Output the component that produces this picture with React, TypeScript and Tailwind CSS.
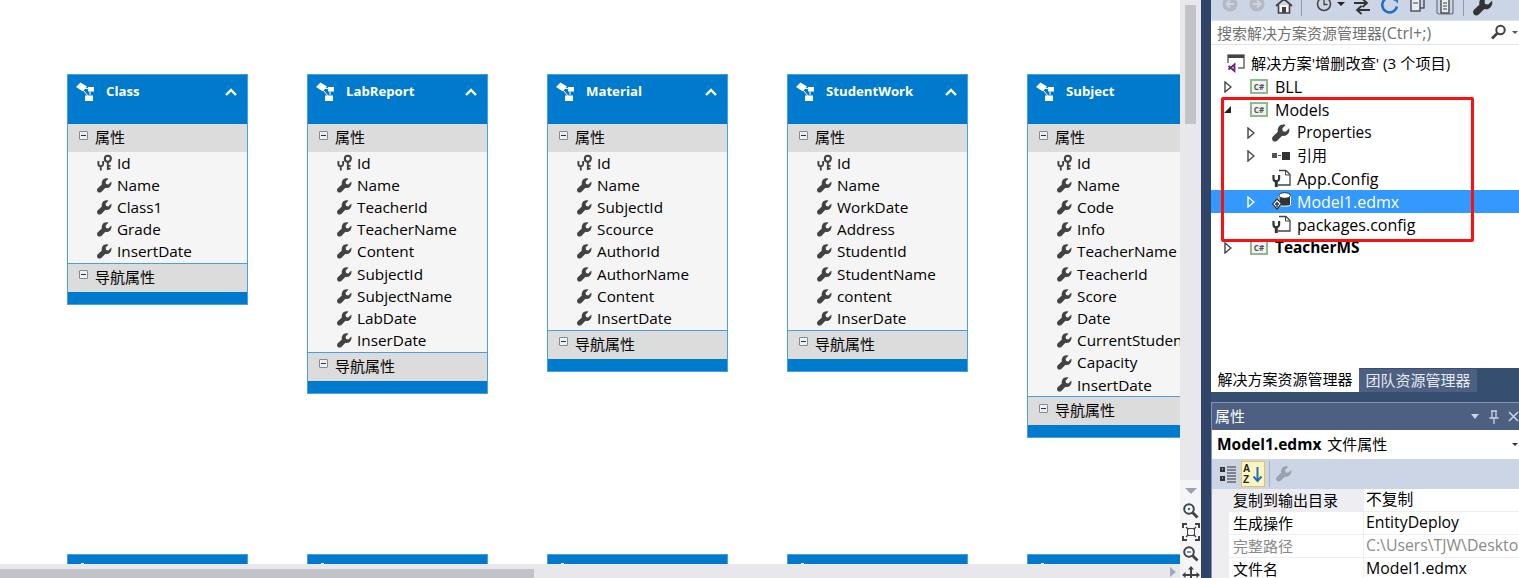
const cards = [
  { name: "Class", rows: ["Id", "Name", "Class1", "Grade", "InsertDate"] },
  { name: "LabReport", rows: ["Id", "Name", "TeacherId", "TeacherName", "Content", "SubjectId", "SubjectName", "LabDate", "InserDate"] },
  { name: "Material", rows: ["Id", "Name", "SubjectId", "Scource", "AuthorId", "AuthorName", "Content", "InsertDate"] },
  { name: "StudentWork", rows: ["Id", "Name", "WorkDate", "Address", "StudentId", "StudentName", "content", "InserDate"] },
  { name: "Subject", rows: ["Id", "Name", "Code", "Info", "TeacherName", "TeacherId", "Score", "Date", "CurrentStudent", "Capacity", "InsertDate"] },
];

const wrenchPath =
  "M15.2 3.8 L12.2 6.8 L9.6 6.4 L9.2 3.8 L12.2 .8 C9.8 -.2 7.4 .6 6 2.4 C5 3.8 4.8 5.4 5.2 6.8 L.8 11 C-.2 12 -.2 13.6 .8 14.8 C1.8 15.8 3.4 15.8 4.6 14.8 L9 10.4 C10.6 11 12.4 10.6 13.8 9.2 C15.2 7.8 15.8 5.8 15.2 3.8 Z";

function Wrench({ size = 15, color = "#424242" }: { size?: number; color?: string }) {
  return (
    <svg width={size} height={size} viewBox="0 0 16 16" className="shrink-0">
      <path d={wrenchPath} fill={color} />
    </svg>
  );
}

function KeyWrench() {
  return (
    <svg width="16" height="18" viewBox="0 0 17 18" className="shrink-0">
      <circle cx="11.500" cy="4.500" r="3.200" fill="none" stroke="#424242" strokeWidth="2.200" />
      <path d="M11.500 7.500v9M11.500 12h3M11.500 15h3" stroke="#424242" strokeWidth="2" fill="none" />
      <path d="M1.500 7v3a2.500 2.500 0 0 0 5 0V7M4 12v5" stroke="#424242" strokeWidth="2" fill="none" />
    </svg>
  );
}

function EntityIcon() {
  return (
    <svg width="20" height="21" viewBox="0 0 20 21" className="shrink-0">
      <path d="M5.500 .5 12 4.500 8 9.500 1 5z" fill="#fff" />
      <path d="M10 6.500h6M15 8v5M9 9l4 5" stroke="#fff" strokeWidth="1" fill="none" />
      <rect x="13" y="5" width="6" height="4.500" fill="#fff" />
      <rect x="10" y="13.500" width="8" height="5.500" fill="#fff" />
    </svg>
  );
}

function MinusBox() {
  return (
    <span className="flex h-[9px] w-[9px] shrink-0 items-center justify-center rounded-[1px] border border-[#7f8b9c] bg-[#eef1f5]">
      <span className="h-px w-[5px] bg-[#333]" />
    </span>
  );
}

function SectionHead({ label }: { label: string }) {
  return (
    <div className="flex h-[28px] items-center gap-[7px] bg-[#dcdcdc] pb-[1px] pl-[11px] text-[15px] leading-none text-black">
      <span className="-mt-[5px]">
        <MinusBox />
      </span>
      {label}
    </div>
  );
}

function EntityCard({ name, rows }: { name: string; rows: string[] }) {
  return (
    <div className="w-[181px] shrink-0 border border-[#4a9fdc] bg-[#007acc]">
      <div className="flex h-[49px] items-start pl-[7px] pr-[9px] pt-[7px]">
        <EntityIcon />
        <span className="ml-[11px] flex-1 text-[13.200px] font-bold leading-[18px] text-white">{name}</span>
        <svg width="14" height="10" viewBox="0 0 14 10" className="mt-[5px]">
          <path d="M2 8l5-5 5 5" stroke="#fff" strokeWidth="2.400" fill="none" />
        </svg>
      </div>
      <SectionHead label="属性" />
      <div className="bg-[#f5f5f5]">
        {rows.map((row, i) => (
          <div key={i} className="flex h-[22.200px] items-center pl-[29px] text-[15.300px] text-black">
            <span className="flex w-[20px] justify-start">{i === 0 ? <KeyWrench /> : <Wrench />}</span>
            <span className="whitespace-nowrap">{row}</span>
          </div>
        ))}
      </div>
      <div className="border-t border-[#4a9fdc]">
        <SectionHead label="导航属性" />
      </div>
      <div className="h-[12px]" />
    </div>
  );
}

function BlankCard() {
  return (
    <div className="h-[60px] w-[181px] shrink-0 border border-[#4a9fdc] bg-[#007acc] pl-[13px] pt-[8px]">
      <div className="h-[2px] w-[3px] bg-white" />
    </div>
  );
}

function ZoomIcon({ mark }: { mark: "plus" | "minus" }) {
  return (
    <svg width="17" height="17" viewBox="0 0 17 17">
      <circle cx="7" cy="7" r="4.800" fill="#fff" stroke="#424242" strokeWidth="2" />
      <path d="M10.500 10.500l5 5" stroke="#424242" strokeWidth="2.800" />
      {mark === "plus" ? <circle cx="7" cy="7" r="1.300" fill="#1e6fc4" /> : <path d="M5 7h4" stroke="#1e6fc4" strokeWidth="1.400" />}
    </svg>
  );
}

function VerticalBar() {
  return (
    <div className="flex w-[21px] shrink-0 flex-col items-center bg-[#e8e8ec]">
      <div className="mt-[5px] h-[119px] w-[11px] bg-[#c2c3c9]" />
      <div className="flex-1" />
      <div className="flex w-full flex-col items-center bg-[#f5f5f7] pt-[8px]">
        <span className="h-0 w-0 border-x-[6px] border-t-[6px] border-x-transparent border-t-[#9aa0ae]" />
        <div className="mt-[8px] -mb-[6px] flex flex-col items-center gap-[4px]">
          <ZoomIcon mark="plus" />
          <svg width="18" height="18" viewBox="0 0 18 18">
            <path d="M1 5V1h4M13 1h4v4M17 13v4h-4M5 17H1v-4" stroke="#424242" strokeWidth="2" fill="none" />
            <path d="M4 4l2.500 2.500M14 4l-2.500 2.500M14 14l-2.500-2.500M4 14l2.500-2.500" stroke="#424242" strokeWidth="1.400" />
            <rect x="5.500" y="5.500" width="7" height="7" fill="none" stroke="#424242" />
          </svg>
          <ZoomIcon mark="minus" />
          <svg width="18" height="18" viewBox="0 0 18 18">
            <path d="M9 1v16M1 9h16" stroke="#424242" strokeWidth="2" />
            <path d="M9 0l3 3.500H6zM9 18l3-3.500H6zM0 9l3.500-3v6zM18 9l-3.500-3v6z" fill="#424242" />
          </svg>
        </div>
      </div>
    </div>
  );
}

function Toolbar() {
  return (
    <div className="flex h-[20px] items-start overflow-hidden bg-[#ccd5e5] pl-[11px]">
      <div className="-mt-[9px] flex items-center">
        <svg width="16" height="16" viewBox="0 0 16 16">
          <circle cx="8" cy="8" r="7.500" fill="#b4b9c4" />
          <path d="M12 8H5M8 4.500 4.500 8 8 11.500" stroke="#ccd5e5" strokeWidth="2" fill="none" />
        </svg>
        <svg width="16" height="16" viewBox="0 0 16 16" className="ml-[11px]">
          <circle cx="8" cy="8" r="7.500" fill="#b4b9c4" />
          <path d="M4 8h7M8 4.500 11.500 8 8 11.500" stroke="#ccd5e5" strokeWidth="2" fill="none" />
        </svg>
        <svg width="18" height="18" viewBox="0 0 18 18" className="ml-[10px] mt-[3px]">
          <path d="M1 9 9 2l8 7" stroke="#424242" strokeWidth="1.800" fill="none" />
          <path d="M3.500 8v8h11V8" stroke="#424242" strokeWidth="1.600" fill="#f5f5f5" />
          <rect x="7" y="10" width="4" height="6" fill="#424242" />
        </svg>
        <span className="ml-[8px] h-[24px] w-px bg-[#8f99ad]" />
        <svg width="16" height="16" viewBox="0 0 16 16" className="ml-[14px]">
          <circle cx="8" cy="8" r="6.500" fill="none" stroke="#424242" strokeWidth="1.500" />
          <path d="M8 4v4.500h3.500" stroke="#424242" strokeWidth="1.300" fill="none" />
        </svg>
        <span className="ml-[5px] h-0 w-0 border-x-[4px] border-t-[4px] border-x-transparent border-t-[#222]" />
        <svg width="19" height="19" viewBox="0 0 19 19" className="ml-[8px] mt-[7px]">
          <path d="M1 5h12M9.500 1 14 5 9.500 9" stroke="#333" strokeWidth="1.800" fill="none" />
          <path d="M17 12H5M8.500 8 4 12l4.500 4" stroke="#333" strokeWidth="1.800" fill="none" />
        </svg>
        <svg width="19" height="19" viewBox="0 0 18 18" className="ml-[8px] mt-[3px]">
          <path d="M14.500 4A7 7 0 1 0 16 10" stroke="#1e6fc4" strokeWidth="2.400" fill="none" />
          <path d="M11 1h6v6z" fill="#1e6fc4" />
        </svg>
        <svg width="17" height="17" viewBox="0 0 17 17" className="ml-[10px]">
          <rect x="6" y="1" width="9" height="11" fill="#ccd5e5" stroke="#424242" strokeWidth="1.300" />
          <rect x="2" y="3" width="9" height="12" fill="#e8ecf3" stroke="#424242" strokeWidth="1.300" />
          <path d="M4 7h5" stroke="#424242" />
        </svg>
        <svg width="18" height="18" viewBox="0 0 18 18" className="ml-[10px] mt-[3px]">
          <rect x="1" y="2" width="16" height="15" rx="2" fill="none" stroke="#6b7280" strokeWidth="1.200" />
          <rect x="5" y="1" width="8" height="15" fill="#e8ecf3" stroke="#424242" strokeWidth="1.300" />
          <path d="M7 6h4M7 9h4M7 12h4" stroke="#424242" />
        </svg>
        <span className="ml-[9px] h-[24px] w-px bg-[#8f99ad]" />
        <span className="ml-[9px] mt-[3px]">
          <Wrench size={20} color="#333" />
        </span>
      </div>
    </div>
  );
}

function TriangleOpen({ light = false }: { light?: boolean }) {
  return (
    <svg width="8" height="12" viewBox="0 0 8 12" className="shrink-0">
      <path d="M1 1l6 5-6 5z" fill="none" stroke={light ? "#fff" : "#444"} strokeWidth="1.400" />
    </svg>
  );
}

function CsProject() {
  return (
    <span className="flex h-[15px] w-[18px] shrink-0 items-center justify-center border-2 border-[#8dbb8d] bg-[#f3f3f3] text-[8px] font-bold leading-none text-[#555]">
      C#
    </span>
  );
}

function ConfigIcon() {
  return (
    <svg width="20" height="19" viewBox="0 0 20 19" className="shrink-0">
      <path d="M7 1.500h7l4 4V16H6" fill="#fff" stroke="#444" strokeWidth="1.300" />
      <path d="M13.500 1.500v4.500h4.500" fill="none" stroke="#444" />
      <path d="M1.500 6v3.500a2.800 2.800 0 0 0 5.600 0V6" stroke="#333" strokeWidth="2.200" fill="#fff" />
      <path d="M4.300 11v7" stroke="#333" strokeWidth="3" />
    </svg>
  );
}

function EdmxIcon() {
  return (
    <svg width="20" height="19" viewBox="0 0 20 19" className="shrink-0">
      <path d="M7 3.500v9.500c0 1.500 11.500 1.500 11.500 0V3.500z" fill="#333" stroke="#fff" />
      <ellipse cx="12.700" cy="3.500" rx="5.800" ry="2.800" fill="#fff" stroke="#333" />
      <path d="M5 7l4.500 4.500L5 17 .5 12z" fill="#fff" stroke="#333" strokeWidth="1.200" />
      <path d="M3 12h4M5 10v5" stroke="#333" strokeWidth="1.400" />
    </svg>
  );
}

function SolutionTree() {
  const row = "flex h-[23px] items-center text-[16px] whitespace-nowrap text-black";
  return (
    <div className="relative h-[323px] bg-white pt-[7px]">
      <div className={`${row} pl-[16px] !text-[15.200px]`}>
        <svg width="18" height="19" viewBox="0 0 18 19" className="shrink-0">
          <rect x="1" y="1" width="16" height="13" fill="#fff" stroke="#444" strokeWidth="1.200" />
          <rect x="1" y="1" width="16" height="3" fill="#444" />
          <rect x="0" y="9" width="11" height="10" fill="#fff" />
          <path d="M1.500 12l6 5V10.500l-6 5" fill="none" stroke="#68217a" strokeWidth="1.800" />
        </svg>
        <span className="ml-[6px]">解决方案'增删改查' (3 个项目)</span>
      </div>
      <div className={`${row} pl-[13px]`}>
        <span className="w-[26px]"><TriangleOpen /></span>
        <CsProject />
        <span className="ml-[7px]">BLL</span>
      </div>
      <div className={`${row} pl-[12px]`}>
        <span className="w-[27px]">
          <svg width="9" height="9" viewBox="0 0 9 9"><path d="M8 1v7H1z" fill="#222" /></svg>
        </span>
        <CsProject />
        <span className="ml-[7px]">Models</span>
      </div>
      <div className={`${row} pl-[36px] !text-[15.400px]`}>
        <span className="w-[25px]"><TriangleOpen /></span>
        <span className="w-[25px]"><Wrench size={18} /></span>
        Properties
      </div>
      <div className={`${row} pl-[36px] !text-[15px]`}>
        <span className="w-[25px]"><TriangleOpen /></span>
        <span className="flex w-[25px] items-center gap-[1px]">
          <span className="h-[5px] w-[5px] bg-[#555]" />
          <span className="h-px w-[3px] bg-[#555]" />
          <span className="h-[8px] w-[8px] bg-[#333]" />
        </span>
        引用
      </div>
      <div className={`${row} pl-[61px]`}>
        <span className="w-[25px]"><ConfigIcon /></span>
        App.Config
      </div>
      <div className={`${row} bg-[#3399ff] pl-[36px] text-white`}>
        <span className="w-[25px]"><TriangleOpen light /></span>
        <span className="w-[25px]"><EdmxIcon /></span>
        Model1.edmx
      </div>
      <div className={`${row} pl-[61px]`}>
        <span className="w-[25px]"><ConfigIcon /></span>
        packages.config
      </div>
      <div className={`${row} pl-[13px] !text-[15.400px] font-bold`}>
        <span className="w-[26px]"><TriangleOpen /></span>
        <CsProject />
        <span className="ml-[7px]">TeacherMS</span>
      </div>
      {/* annotation drawn on top of the screenshot */}
      <div className="absolute left-[10px] top-[52px] h-[145px] w-[253px] rounded-[2px] border-[3px] border-[#fb1010]" />
    </div>
  );
}

const props = [
  { label: "复制到输出目录", value: "不复制", active: true },
  { label: "生成操作", value: "EntityDeploy" },
  { label: "完整路径", value: "C:\\Users\\TJW\\Desktop\\增删改查", muted: true },
  { label: "文件名", value: "Model1.edmx" },
];

function PropertiesPanel() {
  return (
    <div className="min-h-0 flex-1 border-l border-t border-[#8494b0]">
      <div className="flex h-[27px] items-center bg-[#4d6082] pl-[3px] text-[15px] text-white">
        <span className="flex-1">属性</span>
        <span className="h-0 w-0 border-x-[4px] border-t-[5px] border-x-transparent border-t-[#ccd5e5]" />
        <svg width="12" height="14" viewBox="0 0 12 14" className="ml-[9px]">
          <path d="M3 1h6M4 1v7M8 1v7M1.500 8h9M6 8v6" stroke="#ccd5e5" strokeWidth="1.300" fill="none" />
        </svg>
        <svg width="11" height="11" viewBox="0 0 11 11" className="ml-[8px]">
          <path d="M1 1l9 9M10 1l-9 9" stroke="#ccd5e5" strokeWidth="1.500" />
        </svg>
      </div>
      <div className="flex h-[29px] items-center justify-between bg-white pl-[5px] pr-[1px] text-[15px] text-black">
        <span>
          <b className="text-[15.500px]">Model1.edmx</b> <span className="ml-[2px]">文件属性</span>
        </span>
        <span className="h-0 w-0 border-x-[3px] border-t-[3px] border-x-transparent border-t-[#333]" />
      </div>
      <div className="flex h-[30px] items-center bg-[#ccd5e5] pl-[7px]">
        <svg width="18" height="20" viewBox="0 0 18 20">
          <path d="M1 3h5v5H1zM1 12h5v5H1z" fill="#333" />
          <path d="M3 5h1M3 14h1" stroke="#fff" />
          <path d="M8 3h9M8 6h9M8 9h9M8 12h9M8 15h9M8 18h9" stroke="#333" />
        </svg>
        <span className="ml-[4px] flex h-[26px] w-[24px] items-center justify-center border border-[#e5c365] bg-[#fdf4bf]">
          <svg width="20" height="22" viewBox="0 0 20 22">
            <text x="0" y="9" fontSize="10" fontWeight="700" fill="#222" fontFamily="Liberation Sans, sans-serif">A</text>
            <text x="0" y="20" fontSize="10" fontWeight="700" fill="#222" fontFamily="Liberation Sans, sans-serif">Z</text>
            <path d="M14.500 4v14M10.500 13.500l4 4.500 4-4.500" stroke="#1e6fc4" strokeWidth="2" fill="none" />
          </svg>
        </span>
        <span className="ml-[4px] h-[26px] w-px bg-[#a5afc2]" />
        <span className="ml-[6px]">
          <Wrench size={16} color="#9aa0ae" />
        </span>
      </div>
      <div className="bg-[#eeeef2] pl-[17px] text-[15px] leading-none">
        {props.map((p) => (
          <div key={p.label} className="flex h-[23px] border-b border-[#eeeef2]">
            <div className={`flex w-[134px] shrink-0 items-center pl-[4px] ${p.active ? "bg-[#eeeef2]" : "bg-white"} ${p.muted ? "text-[#8a8a8a]" : "text-black"}`}>
              {p.label}
            </div>
            <div className={`ml-px flex flex-1 items-center overflow-hidden whitespace-nowrap bg-white pl-[2px] text-[15.800px] ${p.muted ? "text-[#8a8a8a]" : "text-black"}`}>
              {p.value}
            </div>
          </div>
        ))}
      </div>
    </div>
  );
}

export default function App() {
  return (
    <div className="flex h-[578px] w-[1519px] overflow-hidden bg-white font-['Open_Sans','Noto_Sans_CJK_SC',sans-serif]">
      {/* Designer canvas */}
      <div className="flex min-w-0 flex-1 flex-col">
        <div className="min-h-0 flex-1 overflow-hidden bg-white pl-[67px] pt-[74px]">
          <div className="flex h-[480px] items-start gap-[59px]">
            {cards.map((c) => (
              <EntityCard key={c.name} name={c.name} rows={c.rows} />
            ))}
          </div>
          <div className="flex items-start gap-[59px]">
            {cards.map((c) => (
              <BlankCard key={c.name} />
            ))}
          </div>
        </div>
        <div className="relative h-[14px] shrink-0 bg-[#e8e8ec] pt-[5px]">
          <div className="h-[9px] w-[534px] bg-[#c2c3c9]" />
          <span className="absolute right-[4px] top-[3px] h-0 w-0 border-y-[5px] border-l-[6px] border-y-transparent border-l-[#a2a9ba]" />
        </div>
      </div>
      <VerticalBar />

      {/* Solution explorer + properties */}
      <div className="flex w-[318px] shrink-0 flex-col bg-[#2f4468] pl-[10px]">
        <Toolbar />
        <div className="flex h-[25px] items-center justify-between border-y border-[#dfe3ec] bg-white pl-[6px] pr-[1px] text-[15px] text-[#717171]">
          <span>
            搜索解决方案资源管理器<span className="text-[16px]">(Ctrl+;)</span>
          </span>
          <span className="flex items-center gap-[5px]">
            <svg width="17" height="17" viewBox="0 0 17 17">
              <circle cx="10.500" cy="6" r="4.200" fill="none" stroke="#424242" strokeWidth="2" />
              <path d="M7.500 9 2 14.500" stroke="#424242" strokeWidth="2.800" />
            </svg>
            <span className="h-0 w-0 border-x-[3px] border-t-[3px] border-x-transparent border-t-[#555]" />
          </span>
        </div>
        <SolutionTree />
        <div className="flex h-[24px] bg-[#364e6f] text-[15px] leading-none">
          <div className="flex w-[148px] items-center justify-center bg-white pb-[1px] text-black">解决方案资源管理器</div>
          <div className="mt-[1px] flex w-[118px] items-center justify-center bg-[#4d6082] text-[#e6eaf2]">团队资源管理器</div>
        </div>
        <div className="h-[10px] bg-[#364e6f]" />
        <PropertiesPanel />
      </div>
    </div>
  );
}
